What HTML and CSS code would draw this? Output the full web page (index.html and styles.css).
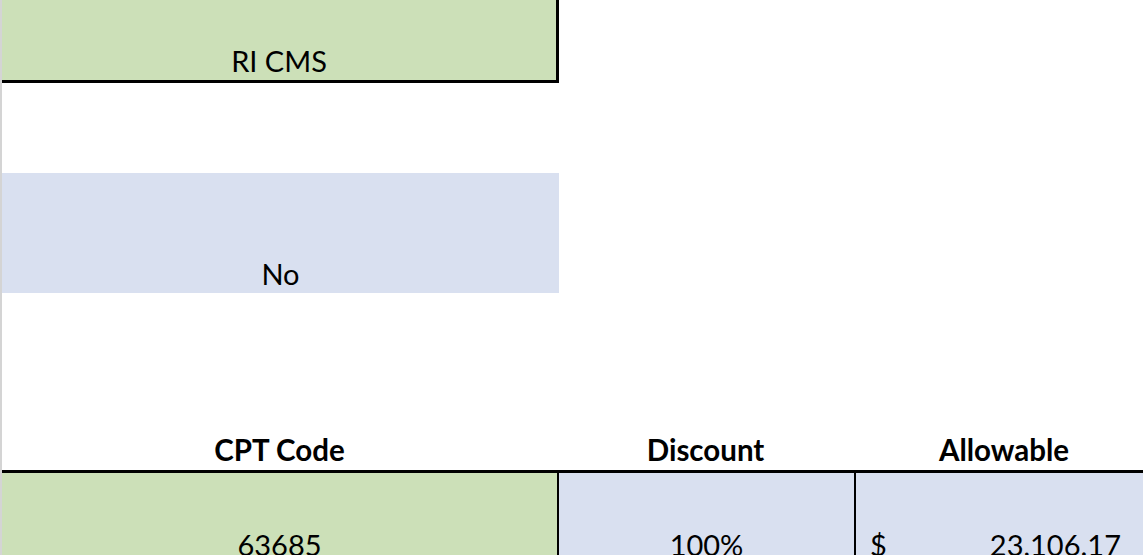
FILE: index.html
```html
<!DOCTYPE html>
<html>
<head>
<meta charset="utf-8">
<link rel="stylesheet" href="styles.css">
</head>
<body>
<div class="sheet">
  <div class="row row-top">
    <div class="cell green boxed">RI CMS</div>
  </div>
  <div class="row row-gap1"></div>
  <div class="row row-no">
    <div class="cell blue wide">No</div>
  </div>
  <div class="row row-gap2"></div>
  <div class="row row-head">
    <div class="cell col-a bold">CPT Code</div>
    <div class="cell col-b bold">Discount</div>
    <div class="cell col-c bold">Allowable</div>
  </div>
  <div class="row row-data">
    <div class="cell col-a green">63685</div>
    <div class="cell col-b blue line-left">100%</div>
    <div class="cell col-c blue line-left money"><span>$</span><span>23,106.17</span></div>
  </div>
</div>
</body>
</html>
```

FILE: styles.css
```css
html, body {
  margin: 0;
  padding: 0;
  background: #ffffff;
}
body {
  font-family: "Lato", "Open Sans", sans-serif;
  font-size: 29px;
  color: #000000;
  overflow: hidden;
  height: 555px;
}
.sheet {
  border-left: 2px solid #d4d4d4;
  height: 555px;
  display: flex;
  flex-direction: column;
  overflow: hidden;
}
.row {
  display: flex;
  flex-shrink: 0;
}
.cell {
  display: flex;
  flex-shrink: 0;
  align-items: flex-end;
  justify-content: center;
  box-sizing: border-box;
  line-height: 1;
  padding-bottom: 5px;
}
.green { background: #cce0b8; }
.blue { background: #d9e0f0; }
.bold { font-weight: 700; font-size: 29.5px; }

.row-top { height: 83px; }
.boxed {
  width: 557px;
  border-right: 3px solid #000;
  border-bottom: 3px solid #000;
}
.row-gap1 { height: 90px; }
.row-no { height: 120px; }
.wide { width: 557px; padding-bottom: 5px; }
.row-gap2 { height: 134px; }
.row-head {
  height: 43px;
  border-bottom: 3px solid #000;
}
.row-head .cell { padding-bottom: 6px; }
.col-a { width: 555px; }
.col-b { width: 297px; }
.col-c { width: 300px; }
.row-data { height: 82px; }
.row-data .cell { padding-bottom: 0; margin-bottom: -4px; }
.line-left { border-left: 2px solid #000; }
.money {
  justify-content: space-between;
  padding-left: 14px;
  padding-right: 33px;
}
```
